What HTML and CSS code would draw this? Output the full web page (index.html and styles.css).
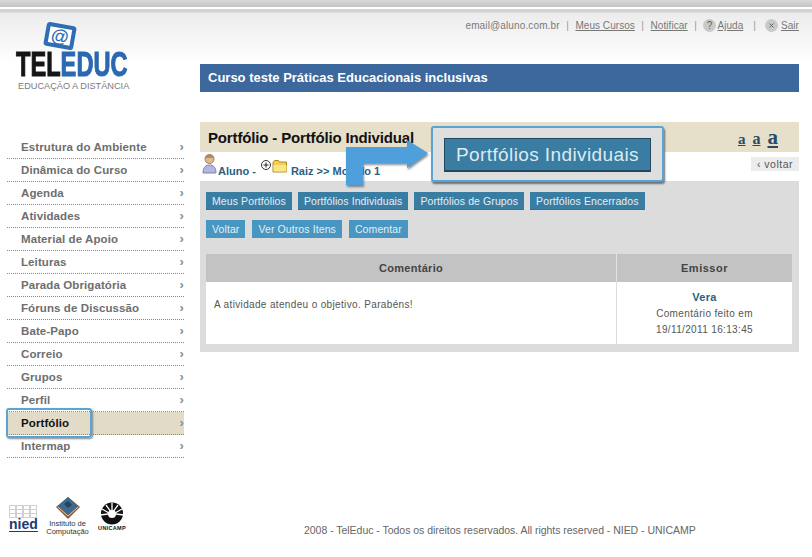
FILE: index.html
```html
<!DOCTYPE html>
<html lang="pt-BR">
<head>
<meta charset="utf-8">
<title>TelEduc</title>
<link rel="stylesheet" href="styles.css">
</head>
<body>
<div class="page">
  <aside class="side">
    <div class="logo">
      <div class="logo-screen"><span>@</span></div>
      <div class="logo-word"><span class="w-black">TEL</span><span class="w-blue">EDUC</span></div>
      <div class="logo-sub">EDUCAÇÃO A DISTÂNCIA</div>
    </div>
    <ul class="menu">
      <li class="item">Estrutura do Ambiente<i>›</i></li>
      <li class="item">Dinâmica do Curso<i>›</i></li>
      <li class="item">Agenda<i>›</i></li>
      <li class="item">Atividades<i>›</i></li>
      <li class="item">Material de Apoio<i>›</i></li>
      <li class="item">Leituras<i>›</i></li>
      <li class="item">Parada Obrigatória<i>›</i></li>
      <li class="item">Fóruns de Discussão<i>›</i></li>
      <li class="item">Bate-Papo<i>›</i></li>
      <li class="item">Correio<i>›</i></li>
      <li class="item">Grupos<i>›</i></li>
      <li class="item">Perfil<i>›</i></li>
      <li class="item item-on">Portfólio<i>›</i><span class="focus-box"></span></li>
      <li class="item">Intermap<i>›</i></li>
    </ul>
    <div class="partners">
      <div class="nied">
        <svg width="29" height="13" viewBox="0 0 29 13"><g fill="none" stroke="#d0d0d0"><rect x=".5" y=".5" width="6" height="12"/><rect x="7.5" y=".5" width="6" height="12"/><rect x="14.5" y=".5" width="6" height="12"/><rect x="21.5" y=".5" width="6" height="12"/><path d="M0 4.500h28M0 8.500h28"/></g></svg>
        <span>nied</span>
      </div>
      <div class="ic">
        <svg width="26" height="24" viewBox="0 0 26 24"><path d="M13 1 25 11 13 23 1 11Z" fill="#8a5a3a"/><path d="M13 1 23 10 13 19 3 10Z" fill="#3c6a90"/><path d="M9 8l4-3 4 4-4 3Z" fill="#26445f"/><path d="M3 11 13 20 23 11" fill="none" stroke="#e3c9a8"/></svg>
        <span>Instituto de<br>Computação</span>
      </div>
      <div class="uni">
        <svg width="30" height="23" viewBox="0 0 30 23"><circle cx="15" cy="11.500" r="11" fill="#111"/><circle cx="15" cy="12" r="4" fill="#fff"/><path d="M5 7l7 4M9 3l5 7M15 1v8M21 3l-5 7M25 7l-7 4M3 13l8-1M27 13l-8-1" stroke="#fff" stroke-width="1.300"/></svg>
        <span>UNICAMP</span>
      </div>
    </div>
  </aside>

  <main class="content">
    <nav class="toplinks">
      <span>email@aluno.com.br</span><b class="sep">|</b>
      <a>Meus Cursos</a><b class="sep">|</b>
      <a>Notificar</a><b class="sep">|</b>
      <svg class="round round-help" width="13" height="13" viewBox="0 0 13 13"><circle cx="6.500" cy="6.500" r="6.500" fill="#c9c9c9"/><text x="6.500" y="10" text-anchor="middle" class="round-t">?</text></svg>
      <a>Ajuda</a><b class="sep wide">|</b>
      <svg class="round" width="13" height="13" viewBox="0 0 13 13"><circle cx="6.500" cy="6.500" r="6.500" fill="#c9c9c9"/><path d="M4.500 4.500l4 4M8.500 4.500l-4 4" stroke="#666"/></svg>
      <a>Sair</a>
    </nav>
    <div class="course">Curso teste Práticas Educacionais inclusivas</div>
    <div class="titlebar">
      <h1>Portfólio - Portfólio Individual</h1>
      <div class="sizes"><a class="s1">a</a><a class="s2">a</a><a class="s3">a</a></div>
    </div>
    <div class="crumbs">
      <svg class="person" width="15" height="20" viewBox="0 0 15 20"><circle cx="7.500" cy="5" r="4.500" fill="#e6b98c" stroke="#9a8060"/><path d="M3 4a4.500 3.500 0 0 1 9 0Z" fill="#a98e6a"/><path d="M1 19c0-6 3-8 6.500-8s6.500 2 6.500 8Z" fill="#b3b6e0" stroke="#7f83ad"/></svg>
      <span class="who">Aluno -</span>
      <svg class="plus" width="10" height="10" viewBox="0 0 10 10"><circle cx="5" cy="5" r="4.500" fill="#fff" stroke="#333"/><path d="M2.500 5h5M5 2.500v5" stroke="#222"/></svg>
      <svg class="folder" width="16" height="14" viewBox="0 0 16 14"><path d="M1 3.500 2.500 1.500h4l1 1.500h7v10H1Z" fill="#f5d050" stroke="#a98a20"/><path d="M1.500 6h13v6.500h-13Z" fill="#fbe58a"/></svg>
      <span class="path">Raiz &gt;&gt; Modelo 1</span>
      <a class="back">‹ voltar</a>
    </div>
    <section class="panel">
      <div class="btnrow">
        <a class="btn dark">Meus Portfólios</a>
        <a class="btn dark">Portfólios Individuais</a>
        <a class="btn dark">Portfólios de Grupos</a>
        <a class="btn dark">Portfólios Encerrados</a>
      </div>
      <div class="btnrow btnrow-wide">
        <a class="btn light">Voltar</a>
        <a class="btn light">Ver Outros Itens</a>
        <a class="btn light">Comentar</a>
      </div>
      <div class="table">
        <div class="th">Comentário</div>
        <div class="th th-small">Emissor</div>
        <div class="td-left">A atividade atendeu o objetivo. Parabéns!</div>
        <div class="td-right"><strong>Vera</strong><br>Comentário feito em<br>19/11/2011 16:13:45</div>
      </div>
    </section>
    <footer class="foot">2008 - TelEduc - Todos os direitos reservados. All rights reserved - NIED - UNICAMP</footer>
  </main>

  <svg class="arrow" width="92" height="52" viewBox="0 0 92 52"><path d="M6 12H67V5L88 18 67 33V28H23V50H6Z" fill="#4f9fdc"/></svg>
  <div class="callout"><span>Portfólios Individuais</span></div>
</div>
</body>
</html>
```
FILE: styles.css
```css
* { box-sizing: border-box; }
html, body { margin: 0; padding: 0; }
body { font-family: "Liberation Sans", Arial, sans-serif; background: #fff; }
.page {
  position: relative;
  width: 812px;
  height: 557px;
  overflow: hidden;
  display: grid;
  grid-template-columns: 200px 599px;
  background: linear-gradient(#d9d9d9 0, #c4c4c4 7px, #fff 7px, #fff 9px, #d2d2d2 9px, #d2d2d2 12px, #ececec 13px, #fff 64px) no-repeat;
}
a { color: inherit; }

/* sidebar */
.side { display: flex; flex-direction: column; }
.logo { height: 136px; padding: 24px 0 0 16px; }
.logo-screen {
  width: 30px; height: 24px; margin-left: 29px;
  border: 4px solid #2f6db5; border-radius: 3px; background: #fff;
  transform: rotate(10deg);
  display: flex; align-items: center; justify-content: center;
}
.logo-screen span { font-size: 18px; line-height: 16px; color: #2f6db5; font-weight: bold; }
.logo-word {
  margin-top: 3px; height: 26px; display: flex;
  font-size: 35px; line-height: 26px; font-weight: bold; white-space: nowrap;
  transform: scaleX(.675); transform-origin: 0 50%;
  -webkit-text-stroke: 1px currentColor;
}
.w-black, .w-blue { display: block; height: 26px; }
.w-black { color: #151515; }
.w-blue { color: #2b68b2; }
.logo-sub { margin: 3px 0 0 2px; font-size: 9.200px; line-height: 12px; color: #7b7b7b; white-space: nowrap; }
.menu { list-style: none; margin: 0 0 0 7px; padding: 0; width: 177px; }
.item {
  position: relative;
  height: 23px; padding: 0 0 1px 14px;
  display: flex; align-items: center; justify-content: space-between;
  border-bottom: 1px dotted #8a8a8a;
  font-size: 11.500px; font-weight: bold; color: #6e6e6e; letter-spacing: .1px;
}
.item i { font-style: normal; font-weight: bold; color: #7a8ea0; font-size: 13px; }
.item-on { background: #e1dbc8; color: #111; }
.focus-box {
  position: absolute; left: -1px; top: -4px; width: 86px; height: 30px;
  border: 2px solid #5ba3d2; border-radius: 3px;
  box-shadow: 1px 1px 2px #7d8a96;
}
.partners { margin: 44px 0 0 9px; display: flex; align-items: flex-start; }
.nied { width: 29px; padding-top: 3px; display: flex; flex-direction: column; }
.nied span { font-size: 14px; line-height: 12px; font-weight: bold; color: #1c3a72; border-bottom: 1px solid #1c3a72; height: 14px; }
.ic { width: 45px; margin: -6px 0 0 7px; display: flex; flex-direction: column; align-items: center; }
.ic span { font-size: 7.500px; line-height: 8px; color: #333; text-align: center; white-space: nowrap; }
.uni { width: 36px; margin: 0 0 0 4px; display: flex; flex-direction: column; align-items: center; }
.uni span { font-size: 5.500px; line-height: 7px; font-weight: bold; color: #111; letter-spacing: .3px; }

/* content */
.content { display: flex; flex-direction: column; }
.toplinks {
  height: 64px; padding: 19px 0 0; display: flex; justify-content: flex-end; align-items: flex-start;
  font-size: 10px; line-height: 14px; color: #7a7a7a; letter-spacing: .13px; white-space: nowrap;
}
.toplinks a { text-decoration: underline; color: #777; letter-spacing: .05px; }
.sep { font-weight: normal; margin: 0 6.500px; color: #999; }
.sep.wide { margin: 0 9px 0 10px; }
.round { margin: 0 3px 0 0; }
.round-help { margin-right: 1px; }
.round-t { font-size: 10px; fill: #666; font-family: "Liberation Sans", sans-serif; }
.course {
  height: 28px; padding: 0 8px 1px; display: flex; align-items: center;
  background: #3c689e; color: #fff; font-size: 13px; font-weight: bold;
}
.titlebar {
  margin-top: 30px; height: 30px; padding: 0 8px 0 8px;
  background: #e6dfc9; display: flex; align-items: center; justify-content: space-between;
}
h1 { margin: 0; font-size: 15px; font-weight: bold; color: #111; letter-spacing: -.15px; }
.sizes { display: flex; align-items: baseline; gap: 7px; margin-right: 13px; font-family: "Liberation Serif", serif; font-weight: bold; color: #2a4a66; }
.sizes a { text-decoration: underline; }
.s1 { font-size: 15px; } .s2 { font-size: 16px; } .s3 { font-size: 21px; }
.crumbs { height: 29px; display: flex; align-items: center; background: #fff; font-size: 11px; font-weight: bold; color: #2b6083; }
.person { margin: -6px 1px 0 2px; }
.who { margin: 8px 2px 0 0; }
.plus { margin: -3px 0 0 3px; }
.folder { margin: -1px 3px 0 1px; }
.path { margin-top: 8px; }
.back {
  margin: -5px 0 0 auto; padding: 0 6px; height: 14px; line-height: 14px;
  background: #ececec; color: #555; font-size: 10.500px; font-weight: normal; letter-spacing: .5px;
}
.panel { height: 171px; padding: 11px 7px 0 6px; background: #dcdcdc; }
.btnrow { display: flex; gap: 6px; height: 18px; margin-bottom: 10px; }
.btnrow-wide { gap: 7px; }
.btn {
  height: 18px; padding: 0 6px; display: flex; align-items: center;
  color: #e6eef2; font-size: 10.500px; letter-spacing: .1px; white-space: nowrap;
  border-bottom: 1px solid #37718f;
}
.dark { background: #3a7da3; }
.light { background: #4797c2; border-bottom-color: #4797c2; }
.table {
  margin-top: 16px; height: 90px;
  display: grid; grid-template-columns: 410px 176px; grid-template-rows: 28px 62px;
  background: #fff;
}
.th {
  background: #c3c3c3; display: flex; align-items: center; justify-content: center;
  font-size: 11px; font-weight: bold; color: #444; letter-spacing: .3px;
}
.th-small { border-left: 1px solid #e2e2e2; letter-spacing: .5px; }
.td-left { padding: 16px 8px 0; font-size: 10px; line-height: 14px; color: #555; letter-spacing: .35px; }
.td-right { border-left: 1px solid #dcdcdc; padding-top: 7px; text-align: center; font-size: 10px; line-height: 16px; color: #555; letter-spacing: .35px; }
.td-right strong { color: #2b6083; font-size: 11px; letter-spacing: .3px; }
.foot { margin: 171px 0 0 104px; font-size: 10.500px; line-height: 14px; color: #666; letter-spacing: -.03px; white-space: nowrap; }

/* tutorial overlays */
.arrow { position: absolute; left: 340px; top: 135px; filter: drop-shadow(1px 2px 1px rgba(40, 50, 60, .55)); }
.callout {
  position: absolute; left: 431px; top: 126px; width: 233px; height: 56px;
  padding: 10px 11px; background: #dedede;
  border: 2px solid #5ba3d2; border-radius: 3px; box-shadow: 1px 2px 2px #66707a;
}
.callout span {
  display: flex; align-items: center; justify-content: center; height: 34px;
  background: #3a7da3; border: 1px solid #24465e; border-width: 1px 1px 2px;
  color: #dfe9ef; font-size: 19px; letter-spacing: .4px; white-space: nowrap;
}
```
